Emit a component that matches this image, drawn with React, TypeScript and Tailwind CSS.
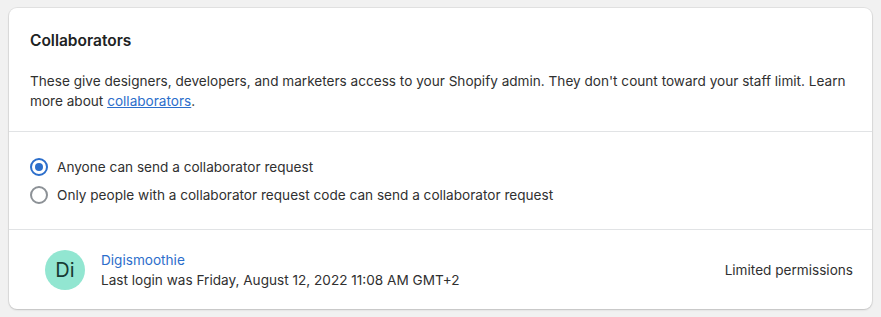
import React from 'react';

const font = { fontFamily: 'Inter, "Liberation Sans", sans-serif' };

const Radio = ({ checked, label }: { checked: boolean; label: string }) => (
    <label className="flex items-center gap-[9px] h-[28px]">
        {checked ? (
            <span className="w-[18px] h-[18px] rounded-full border-2 border-[#2c6ecb] flex items-center justify-center">
                <span className="w-[8px] h-[8px] rounded-full bg-[#2c6ecb]" />
            </span>
        ) : (
            <span className="w-[18px] h-[18px] rounded-full border-2 border-[#8c9196]" />
        )}
        <span className="text-[13.6px] text-[#303030]">{label}</span>
    </label>
);

export default function App() {
    return (
        <div className="w-[881px] h-[317px] bg-[#f1f1f1] pt-[8px] pl-[9px] pr-[9px]" style={font}>
            <div className="bg-white rounded-[8px] shadow-[0_0_0_1px_rgba(0,0,0,0.06),0_1px_2px_rgba(0,0,0,0.15)] h-[301px]">
                <div className="px-[21px] pt-[22px] pb-[20px] border-b border-[#e1e3e5]">
                    <h2 className="text-[15.5px] font-semibold text-[#202223] leading-[22px]">Collaborators</h2>
                    <p className="mt-[19px] text-[13.6px] leading-[20px] text-[#303030]">
                        These give designers, developers, and marketers access to your Shopify admin. They don't count toward your staff limit. Learn more about{' '}
                        <a className="text-[#2c6ecb] underline">collaborators</a>.
                    </p>
                </div>
                <div className="px-[21px] pt-[21px] pb-[20px] border-b border-[#e1e3e5]">
                    <Radio checked label="Anyone can send a collaborator request" />
                    <Radio checked={false} label="Only people with a collaborator request code can send a collaborator request" />
                </div>
                <div className="pl-[36px] pr-[19px] pt-[20px] flex items-center justify-between">
                    <div className="flex items-center gap-[16px]">
                        <div className="w-[40px] h-[40px] rounded-full bg-[#92e6d1] flex items-center justify-center text-[20px] text-[#173b33]">
                            Di
                        </div>
                        <div className="text-[13.6px] leading-[20px]">
                            <div className="text-[#2c6ecb]">Digismoothie</div>
                            <div className="text-[#303030]">Last login was Friday, August 12, 2022 11:08 AM GMT+2</div>
                        </div>
                    </div>
                    <span className="text-[13.6px] text-[#303030]">Limited permissions</span>
                </div>
            </div>
        </div>
    );
}
